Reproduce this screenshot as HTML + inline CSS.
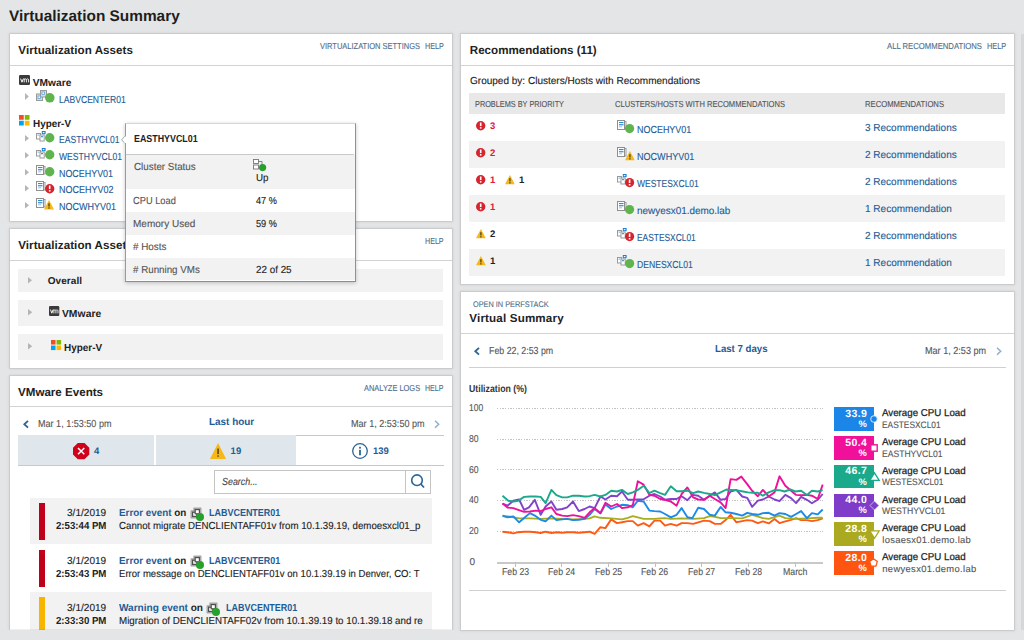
<!DOCTYPE html>
<html><head><meta charset="utf-8"><title>Virtualization Summary</title>
<style>
html,body{margin:0;padding:0;}
body{width:1024px;height:640px;overflow:hidden;position:relative;background:#e4e5e7;font-family:"Liberation Sans", sans-serif;}
.t{position:absolute;white-space:pre;line-height:20px;text-rendering:geometricPrecision;}
svg{overflow:visible;}
</style></head><body>
<div class="t" style="left:9.30px;top:7px;font-size:15.4px;color:#1e1e1e;font-weight:700;transform:scaleX(0.9995);transform-origin:0 0;">Virtualization Summary</div>
<div style="position:absolute;left:10px;top:34px;width:442px;height:187px;background:#fff;box-shadow:0 0 0 1px rgba(0,0,0,0.06),0 0 3px 1px rgba(0,0,0,0.09);"></div>
<div style="position:absolute;left:10px;top:65px;width:442px;height:1px;background:#d2d2d2;"></div>
<div class="t" style="left:18.30px;top:41px;font-size:11.6px;color:#222222;font-weight:700;letter-spacing:0.065px;">Virtualization Assets</div>
<div class="t" style="left:320.00px;top:36px;font-size:8.7px;color:#4f6f8c;transform:scaleX(0.8620);transform-origin:0 0;-webkit-text-stroke:0.12px #4f6f8c;">VIRTUALIZATION SETTINGS</div>
<div class="t" style="left:424.60px;top:36px;font-size:8.7px;color:#4f6f8c;transform:scaleX(0.8325);transform-origin:0 0;-webkit-text-stroke:0.12px #4f6f8c;">HELP</div>
<svg style="position:absolute;left:19px;top:75px" width="11" height="10" viewBox="0 0 11 10"><g transform="scale(1.000,1.000)"><rect x="0" y="0" width="11" height="10" rx="1.2" fill="#3a3a3a"/><path d="M1.6 3.6L3 7.2L4.4 3.6" fill="none" stroke="#fff" stroke-width="1"/><path d="M5.2 7.4V3.6M5.2 4.6Q5.9 3.5 6.9 3.9Q7.4 4.2 7.4 5V7.4M7.4 4.6Q8.1 3.5 9 3.9Q9.6 4.2 9.6 5V7.4" fill="none" stroke="#fff" stroke-width="0.9"/></g></svg>
<div class="t" style="left:32.70px;top:74px;font-size:10.2px;color:#222222;font-weight:700;letter-spacing:0.037px;">VMware</div>
<svg style="position:absolute;left:25px;top:93.4px" width="3.8" height="7" viewBox="0 0 3.8 7"><path d="M0 0L3.8 3.5L0 7Z" fill="#b5b5b5"/></svg>
<svg style="position:absolute;left:36px;top:89.5px" width="12" height="11" viewBox="0 0 12 11"><rect x="0.5" y="4" width="6" height="6.5" fill="#ddd" stroke="#9a9a9a" stroke-width="1"/><rect x="4.5" y="0.5" width="6" height="6.5" fill="#ddd" stroke="#9a9a9a" stroke-width="1"/><rect x="2" y="6" width="2.5" height="2.5" fill="#fff" stroke="#5ba3d6" stroke-width="0.8"/><rect x="6" y="2" width="2.5" height="2.5" fill="#fff" stroke="#5ba3d6" stroke-width="0.8"/></svg>
<svg style="position:absolute;left:44.7px;top:93.10000000000001px" width="9.6" height="9.6" viewBox="0 0 9.6 9.6"><circle cx="4.8" cy="4.8" r="4.8" fill="#5fb44e"/></svg>
<div class="t" style="left:58.80px;top:91px;font-size:10.2px;color:#1d5c96;transform:scaleX(0.8426);transform-origin:0 0;-webkit-text-stroke:0.12px #1d5c96;">LABVCENTER01</div>
<svg style="position:absolute;left:19px;top:115px" width="10.5" height="10.5" viewBox="0 0 10.5 10.5"><rect x="0" y="0" width="4.75" height="4.75" fill="#f25022"/><rect x="5.75" y="0" width="4.75" height="4.75" fill="#7fba00"/><rect x="0" y="5.75" width="4.75" height="4.75" fill="#00a4ef"/><rect x="5.75" y="5.75" width="4.75" height="4.75" fill="#ffb900"/></svg>
<div class="t" style="left:32.70px;top:115px;font-size:10.2px;color:#222222;font-weight:700;transform:scaleX(0.9724);transform-origin:0 0;">Hyper-V</div>
<svg style="position:absolute;left:25.1px;top:134.6px" width="4" height="6.5" viewBox="0 0 4 6.5"><path d="M0 0L4 3.25L0 6.5Z" fill="#b5b5b5"/></svg>
<svg style="position:absolute;left:36px;top:130.9px" width="10" height="10" viewBox="0 0 10 10"><rect x="0.5" y="2.5" width="4" height="5.5" fill="#fff" stroke="#9a9a9a" stroke-width="1"/><rect x="4" y="4" width="4.2" height="6" fill="#fff" stroke="#9a9a9a" stroke-width="1"/><rect x="5.8" y="0" width="3.8" height="3.2" fill="#1e7fcf"/><rect x="6.8" y="1" width="1.6" height="1.2" fill="#fff"/><rect x="5" y="5.2" width="2" height="1" fill="#1e7fcf"/><rect x="1.5" y="3.5" width="2" height="1.2" fill="#7cc0e0"/></svg>
<svg style="position:absolute;left:44.9px;top:133.4px" width="9.4" height="9.4" viewBox="0 0 9.4 9.4"><circle cx="4.7" cy="4.7" r="4.7" fill="#5fb44e"/></svg>
<div class="t" style="left:58.60px;top:131px;font-size:10.2px;color:#1d5c96;transform:scaleX(0.8412);transform-origin:0 0;-webkit-text-stroke:0.12px #1d5c96;">EASTHYVCL01</div>
<svg style="position:absolute;left:25.1px;top:151.6px" width="4" height="6.5" viewBox="0 0 4 6.5"><path d="M0 0L4 3.25L0 6.5Z" fill="#b5b5b5"/></svg>
<svg style="position:absolute;left:36px;top:147.9px" width="10" height="10" viewBox="0 0 10 10"><rect x="0.5" y="2.5" width="4" height="5.5" fill="#fff" stroke="#9a9a9a" stroke-width="1"/><rect x="4" y="4" width="4.2" height="6" fill="#fff" stroke="#9a9a9a" stroke-width="1"/><rect x="5.8" y="0" width="3.8" height="3.2" fill="#1e7fcf"/><rect x="6.8" y="1" width="1.6" height="1.2" fill="#fff"/><rect x="5" y="5.2" width="2" height="1" fill="#1e7fcf"/><rect x="1.5" y="3.5" width="2" height="1.2" fill="#7cc0e0"/></svg>
<svg style="position:absolute;left:44.9px;top:150.4px" width="9.4" height="9.4" viewBox="0 0 9.4 9.4"><circle cx="4.7" cy="4.7" r="4.7" fill="#5fb44e"/></svg>
<div class="t" style="left:58.60px;top:148px;font-size:10.2px;color:#1d5c96;transform:scaleX(0.8430);transform-origin:0 0;-webkit-text-stroke:0.12px #1d5c96;">WESTHYVCL01</div>
<svg style="position:absolute;left:25.1px;top:168.6px" width="4" height="6.5" viewBox="0 0 4 6.5"><path d="M0 0L4 3.25L0 6.5Z" fill="#b5b5b5"/></svg>
<svg style="position:absolute;left:36px;top:165.1px" width="10" height="10" viewBox="0 0 10 10"><rect x="6" y="1.5" width="3" height="7.5" fill="#fff" stroke="#9a9a9a" stroke-width="1"/><rect x="0.5" y="0.5" width="7" height="9" fill="#fff" stroke="#8f8f8f" stroke-width="1"/><rect x="2" y="2" width="4.5" height="1.1" fill="#2b8fd0"/><rect x="2" y="4.2" width="4.5" height="1.1" fill="#2b7fd0"/><rect x="2" y="6.3" width="3" height="1" fill="#8ec5ea"/></svg>
<svg style="position:absolute;left:44.9px;top:167.4px" width="9.4" height="9.4" viewBox="0 0 9.4 9.4"><circle cx="4.7" cy="4.7" r="4.7" fill="#5fb44e"/></svg>
<div class="t" style="left:58.60px;top:165px;font-size:10.2px;color:#1d5c96;transform:scaleX(0.8749);transform-origin:0 0;-webkit-text-stroke:0.12px #1d5c96;">NOCEHYV01</div>
<svg style="position:absolute;left:25.1px;top:184.6px" width="4" height="6.5" viewBox="0 0 4 6.5"><path d="M0 0L4 3.25L0 6.5Z" fill="#b5b5b5"/></svg>
<svg style="position:absolute;left:36px;top:181.1px" width="10" height="10" viewBox="0 0 10 10"><rect x="6" y="1.5" width="3" height="7.5" fill="#fff" stroke="#9a9a9a" stroke-width="1"/><rect x="0.5" y="0.5" width="7" height="9" fill="#fff" stroke="#8f8f8f" stroke-width="1"/><rect x="2" y="2" width="4.5" height="1.1" fill="#2b8fd0"/><rect x="2" y="4.2" width="4.5" height="1.1" fill="#2b7fd0"/><rect x="2" y="6.3" width="3" height="1" fill="#8ec5ea"/></svg>
<svg style="position:absolute;left:45.0px;top:183.9px" width="9.4" height="9.4" viewBox="0 0 9.4 9.4"><circle cx="4.7" cy="4.7" r="4.7" fill="#d7232d"/><rect x="3.9000000000000004" y="1.5" width="1.6" height="3.6" fill="#fff"/><rect x="3.9000000000000004" y="6.1" width="1.6" height="1.5" fill="#fff"/></svg>
<div class="t" style="left:58.60px;top:181px;font-size:10.2px;color:#1d5c96;transform:scaleX(0.8830);transform-origin:0 0;-webkit-text-stroke:0.12px #1d5c96;">NOCEHYV02</div>
<svg style="position:absolute;left:25.1px;top:201.6px" width="4" height="6.5" viewBox="0 0 4 6.5"><path d="M0 0L4 3.25L0 6.5Z" fill="#b5b5b5"/></svg>
<svg style="position:absolute;left:36px;top:198.1px" width="10" height="10" viewBox="0 0 10 10"><rect x="6" y="1.5" width="3" height="7.5" fill="#fff" stroke="#9a9a9a" stroke-width="1"/><rect x="0.5" y="0.5" width="7" height="9" fill="#fff" stroke="#8f8f8f" stroke-width="1"/><rect x="2" y="2" width="4.5" height="1.1" fill="#2b8fd0"/><rect x="2" y="4.2" width="4.5" height="1.1" fill="#2b7fd0"/><rect x="2" y="6.3" width="3" height="1" fill="#8ec5ea"/></svg>
<svg style="position:absolute;left:44.4px;top:200.3px" width="10" height="9.4" viewBox="0 0 10 9.4"><path d="M5.0 0L10 9.4L0 9.4Z" fill="#f5b71a"/><rect x="4.3" y="3.29" width="1.4" height="3.29" fill="#5a4a1a"/><rect x="4.3" y="7.332000000000001" width="1.4" height="1.3" fill="#5a4a1a"/></svg>
<div class="t" style="left:58.60px;top:198px;font-size:10.2px;color:#1d5c96;transform:scaleX(0.8831);transform-origin:0 0;-webkit-text-stroke:0.12px #1d5c96;">NOCWHYV01</div>
<div style="position:absolute;left:10px;top:229px;width:442px;height:139px;background:#fff;box-shadow:0 0 0 1px rgba(0,0,0,0.06),0 0 3px 1px rgba(0,0,0,0.09);"></div>
<div style="position:absolute;left:10px;top:260px;width:442px;height:1px;background:#d2d2d2;"></div>
<div class="t" style="left:18.20px;top:236px;font-size:11.6px;color:#222222;font-weight:700;letter-spacing:0.065px;">Virtualization Assets</div>
<div class="t" style="left:424.80px;top:231px;font-size:8.7px;color:#4f6f8c;transform:scaleX(0.8193);transform-origin:0 0;-webkit-text-stroke:0.12px #4f6f8c;">HELP</div>
<div style="position:absolute;left:18px;top:269px;width:424.5px;height:23px;background:#f2f2f2;"></div>
<div style="position:absolute;left:18px;top:300px;width:424.5px;height:26px;background:#f2f2f2;"></div>
<div style="position:absolute;left:18px;top:334px;width:424.5px;height:26px;background:#f2f2f2;"></div>
<svg style="position:absolute;left:28.2px;top:277px" width="4" height="6.6" viewBox="0 0 4 6.6"><path d="M0 0L4 3.3L0 6.6Z" fill="#b5b5b5"/></svg>
<div class="t" style="left:47.70px;top:272px;font-size:10.0px;color:#222222;font-weight:700;letter-spacing:0.080px;">Overall</div>
<svg style="position:absolute;left:28.1px;top:309.4px" width="4.2" height="6.4" viewBox="0 0 4.2 6.4"><path d="M0 0L4.2 3.2L0 6.4Z" fill="#b5b5b5"/></svg>
<svg style="position:absolute;left:48.75px;top:306px" width="10.3" height="10" viewBox="0 0 10.3 10"><g transform="scale(0.936,1.000)"><rect x="0" y="0" width="11" height="10" rx="1.2" fill="#3a3a3a"/><path d="M1.6 3.6L3 7.2L4.4 3.6" fill="none" stroke="#fff" stroke-width="1"/><path d="M5.2 7.4V3.6M5.2 4.6Q5.9 3.5 6.9 3.9Q7.4 4.2 7.4 5V7.4M7.4 4.6Q8.1 3.5 9 3.9Q9.6 4.2 9.6 5V7.4" fill="none" stroke="#fff" stroke-width="0.9"/></g></svg>
<div class="t" style="left:61.90px;top:305px;font-size:10.3px;color:#222222;font-weight:700;letter-spacing:0.096px;">VMware</div>
<svg style="position:absolute;left:28.1px;top:343px" width="4.2" height="6.4" viewBox="0 0 4.2 6.4"><path d="M0 0L4.2 3.2L0 6.4Z" fill="#b5b5b5"/></svg>
<svg style="position:absolute;left:50.9px;top:339.75px" width="10.1" height="10.1" viewBox="0 0 10.1 10.1"><rect x="0" y="0" width="4.55" height="4.55" fill="#f25022"/><rect x="5.55" y="0" width="4.55" height="4.55" fill="#7fba00"/><rect x="0" y="5.55" width="4.55" height="4.55" fill="#00a4ef"/><rect x="5.55" y="5.55" width="4.55" height="4.55" fill="#ffb900"/></svg>
<div class="t" style="left:64.40px;top:339px;font-size:10.3px;color:#222222;font-weight:700;transform:scaleX(0.9649);transform-origin:0 0;">Hyper-V</div>
<div style="position:absolute;left:10px;top:376px;width:442px;height:254px;background:#fff;box-shadow:0 0 0 1px rgba(0,0,0,0.06),0 0 3px 1px rgba(0,0,0,0.09);"></div>
<div style="position:absolute;left:10px;top:406px;width:442px;height:1px;background:#d2d2d2;"></div>
<div class="t" style="left:18.00px;top:383px;font-size:11.6px;color:#222222;font-weight:700;">VMware Events</div>
<div class="t" style="left:364.20px;top:378px;font-size:8.7px;color:#4f6f8c;transform:scaleX(0.8565);transform-origin:0 0;-webkit-text-stroke:0.12px #4f6f8c;">ANALYZE LOGS</div>
<div class="t" style="left:425.40px;top:378px;font-size:8.7px;color:#4f6f8c;transform:scaleX(0.8105);transform-origin:0 0;-webkit-text-stroke:0.12px #4f6f8c;">HELP</div>
<svg style="position:absolute;left:22.5px;top:420px" width="6" height="8.5" viewBox="0 0 6 8.5"><path d="M5 0.8L1.3 4.25L5 7.7" fill="none" stroke="#2a6496" stroke-width="1.8"/></svg>
<div class="t" style="left:37.60px;top:415px;font-size:10.2px;color:#555555;transform:scaleX(0.8889);transform-origin:0 0;-webkit-text-stroke:0.12px #555555;">Mar 1, 1:53:50 pm</div>
<div class="t" style="left:208.70px;top:413px;font-size:10.2px;color:#1d5c96;font-weight:700;transform:scaleX(0.9737);transform-origin:0 0;">Last hour</div>
<div class="t" style="left:350.70px;top:415px;font-size:10.2px;color:#555555;transform:scaleX(0.8901);transform-origin:0 0;-webkit-text-stroke:0.12px #555555;">Mar 1, 2:53:50 pm</div>
<svg style="position:absolute;left:434px;top:420px" width="6" height="8.5" viewBox="0 0 6 8.5"><path d="M1 0.8L4.7 4.25L1 7.7" fill="none" stroke="#8fb0cc" stroke-width="1.5"/></svg>
<div style="position:absolute;left:18px;top:435px;width:278px;height:30px;background:#dfe7ed;"></div>
<div style="position:absolute;left:154px;top:435px;width:1.5px;height:30px;background:#fff;"></div>
<div style="position:absolute;left:296px;top:435px;width:148px;height:1px;background:#c8c8c8;"></div>
<div style="position:absolute;left:18px;top:465px;width:426px;height:1px;background:#c8c8c8;"></div>
<svg style="position:absolute;left:72.8px;top:442.8px" width="16.3" height="16.3" viewBox="0 0 16.3 16.3"><path d="M4.8 0H11.5L16.3 4.8V11.5L11.5 16.3H4.8L0 11.5V4.8Z" fill="#d0021b"/><path d="M5 5L11.3 11.3M11.3 5L5 11.3" stroke="#fff" stroke-width="1.5"/></svg>
<div class="t" style="left:94.00px;top:442px;font-size:9.5px;color:#1d5c96;font-weight:700;">4</div>
<svg style="position:absolute;left:210px;top:443.1px" width="16.1" height="15.9" viewBox="0 0 16.1 15.9"><path d="M8.05 0L16.1 15.9L0 15.9Z" fill="#f5b71a"/><rect x="7.3500000000000005" y="5.5649999999999995" width="1.4" height="5.5649999999999995" fill="#4a3a10"/><rect x="7.3500000000000005" y="12.402000000000001" width="1.4" height="1.3" fill="#4a3a10"/></svg>
<div class="t" style="left:230.40px;top:442px;font-size:9.5px;color:#1d5c96;font-weight:700;letter-spacing:0.222px;">19</div>
<svg style="position:absolute;left:352px;top:442.9px" width="16" height="16" viewBox="0 0 16 16"><circle cx="8" cy="8" r="7.3" fill="none" stroke="#2a6496" stroke-width="1.3"/><rect x="7.1" y="6.8" width="1.8" height="5.5" fill="#2a6496"/><rect x="7.1" y="3.8" width="1.8" height="1.8" fill="#2a6496"/></svg>
<div class="t" style="left:372.50px;top:442px;font-size:9.5px;color:#1d5c96;font-weight:700;transform:scaleX(0.9963);transform-origin:0 0;">139</div>
<div style="position:absolute;left:214.3px;top:470.4px;width:216.6px;height:23.2px;background:#fff;border:1px solid #c4c4c4;box-sizing:border-box;"></div>
<div style="position:absolute;left:404.7px;top:470.4px;width:1px;height:23.2px;background:#c4c4c4;"></div>
<svg style="position:absolute;left:410px;top:473px" width="16" height="16" viewBox="0 0 16 16"><circle cx="7" cy="7.2" r="5.3" fill="none" stroke="#2a6496" stroke-width="1.6"/><path d="M10.8 11L14 14.5" stroke="#2a6496" stroke-width="1.8"/></svg>
<div class="t" style="left:222.10px;top:473px;font-size:10.2px;color:#444;font-style:italic;transform:scaleX(0.8730);transform-origin:0 0;-webkit-text-stroke:0.12px #444;">Search...</div>
<div style="position:absolute;left:30px;top:498px;width:402px;height:46.39999999999998px;background:#f2f2f2;"></div>
<div style="position:absolute;left:38.7px;top:502.9px;width:6.3px;height:36.8px;background:#c0001a;"></div>
<div class="t" style="left:66.80px;top:504px;font-size:10.2px;color:#222222;transform:scaleX(0.9885);transform-origin:0 0;-webkit-text-stroke:0.12px #222222;">3/1/2019</div>
<div class="t" style="left:55.60px;top:517px;font-size:10.2px;color:#222222;font-weight:700;transform:scaleX(0.9468);transform-origin:0 0;">2:53:44 PM</div>
<div class="t" style="left:118.90px;top:504px;font-size:10.2px;color:#1d5c96;font-weight:700;transform:scaleX(0.9678);transform-origin:0 0;">Error event <span style="color:#222">on</span></div>
<svg style="position:absolute;left:190.2px;top:507px" width="12" height="12" viewBox="0 0 12 12"><path d="M4 1.2H10.8V8H8V10.8H1.2V4H4Z" fill="#c9c9c9" stroke="#a5a5a5" stroke-width="1.4" stroke-linejoin="round"/><rect x="2.6" y="5.2" width="4.2" height="4.2" fill="#fff" stroke="#505050" stroke-width="1.2"/><rect x="5.2" y="2.6" width="4.2" height="4.2" fill="#fff" stroke="#505050" stroke-width="1.2"/></svg>
<svg style="position:absolute;left:196.0px;top:512.8px" width="8" height="8" viewBox="0 0 8 8"><circle cx="4" cy="4" r="4" fill="#27a02c"/></svg>
<div class="t" style="left:209.40px;top:504px;font-size:10.2px;color:#1d5c96;font-weight:700;transform:scaleX(0.8808);transform-origin:0 0;">LABVCENTER01</div>
<div class="t" style="left:118.90px;top:517px;font-size:10.2px;color:#222222;transform:scaleX(0.9531);transform-origin:0 0;-webkit-text-stroke:0.12px #222222;">Cannot migrate DENCLIENTAFF01v from 10.1.39.19, demoesxcl01_p</div>
<div style="position:absolute;left:38.7px;top:549.8px;width:6.3px;height:36.8px;background:#c0001a;"></div>
<div class="t" style="left:66.80px;top:552px;font-size:10.2px;color:#222222;transform:scaleX(0.9885);transform-origin:0 0;-webkit-text-stroke:0.12px #222222;">3/1/2019</div>
<div class="t" style="left:55.60px;top:565px;font-size:10.2px;color:#222222;font-weight:700;transform:scaleX(0.9468);transform-origin:0 0;">2:53:43 PM</div>
<div class="t" style="left:118.90px;top:552px;font-size:10.2px;color:#1d5c96;font-weight:700;transform:scaleX(0.9678);transform-origin:0 0;">Error event <span style="color:#222">on</span></div>
<svg style="position:absolute;left:190.2px;top:555px" width="12" height="12" viewBox="0 0 12 12"><path d="M4 1.2H10.8V8H8V10.8H1.2V4H4Z" fill="#c9c9c9" stroke="#a5a5a5" stroke-width="1.4" stroke-linejoin="round"/><rect x="2.6" y="5.2" width="4.2" height="4.2" fill="#fff" stroke="#505050" stroke-width="1.2"/><rect x="5.2" y="2.6" width="4.2" height="4.2" fill="#fff" stroke="#505050" stroke-width="1.2"/></svg>
<svg style="position:absolute;left:196.0px;top:560.8px" width="8" height="8" viewBox="0 0 8 8"><circle cx="4" cy="4" r="4" fill="#27a02c"/></svg>
<div class="t" style="left:209.40px;top:552px;font-size:10.2px;color:#1d5c96;font-weight:700;transform:scaleX(0.8808);transform-origin:0 0;">LABVCENTER01</div>
<div class="t" style="left:118.90px;top:565px;font-size:10.2px;color:#222222;transform:scaleX(0.9387);transform-origin:0 0;-webkit-text-stroke:0.12px #222222;">Error message on DENCLIENTAFF01v on 10.1.39.19 in Denver, CO: T</div>
<div style="position:absolute;left:30px;top:592px;width:402px;height:48px;background:#f2f2f2;"></div>
<div style="position:absolute;left:38.7px;top:597px;width:6.3px;height:36.8px;background:#f7b500;"></div>
<div class="t" style="left:66.80px;top:599px;font-size:10.2px;color:#222222;transform:scaleX(0.9885);transform-origin:0 0;-webkit-text-stroke:0.12px #222222;">3/1/2019</div>
<div class="t" style="left:55.60px;top:612px;font-size:10.2px;color:#222222;font-weight:700;transform:scaleX(0.9468);transform-origin:0 0;">2:33:30 PM</div>
<div class="t" style="left:118.90px;top:599px;font-size:10.2px;color:#1d5c96;font-weight:700;transform:scaleX(0.9871);transform-origin:0 0;">Warning event <span style="color:#222">on</span></div>
<svg style="position:absolute;left:206px;top:602px" width="12" height="12" viewBox="0 0 12 12"><path d="M4 1.2H10.8V8H8V10.8H1.2V4H4Z" fill="#c9c9c9" stroke="#a5a5a5" stroke-width="1.4" stroke-linejoin="round"/><rect x="2.6" y="5.2" width="4.2" height="4.2" fill="#fff" stroke="#505050" stroke-width="1.2"/><rect x="5.2" y="2.6" width="4.2" height="4.2" fill="#fff" stroke="#505050" stroke-width="1.2"/></svg>
<svg style="position:absolute;left:211.8px;top:607.8px" width="8" height="8" viewBox="0 0 8 8"><circle cx="4" cy="4" r="4" fill="#27a02c"/></svg>
<div class="t" style="left:225.50px;top:599px;font-size:10.2px;color:#1d5c96;font-weight:700;transform:scaleX(0.8808);transform-origin:0 0;">LABVCENTER01</div>
<div class="t" style="left:118.90px;top:612px;font-size:10.2px;color:#222222;transform:scaleX(0.9586);transform-origin:0 0;-webkit-text-stroke:0.12px #222222;">Migration of DENCLIENTAFF02v from 10.1.39.19 to 10.1.39.18 and re</div>
<div style="position:absolute;left:0px;top:630px;width:460px;height:10px;background:#e4e5e7;"></div>
<div style="position:absolute;left:10px;top:629px;width:442px;height:1px;background:rgba(0,0,0,0.06);"></div>
<div style="position:absolute;left:124.6px;top:122.7px;width:231px;height:159.3px;background:#fff;border:1px solid;border-color:#d6d6d6 #909090 #8c8c8c #9a9a9a;box-sizing:border-box;box-shadow:0 1px 4px rgba(0,0,0,0.22);"></div>
<svg style="position:absolute;left:120.8px;top:135.6px" width="5" height="7.6" viewBox="0 0 5 7.6"><path d="M4.2 0L0.6 3.8L4.2 7.6Z" fill="#fff"/><path d="M4.2 0L0.6 3.8L4.2 7.6" fill="none" stroke="#9a9a9a" stroke-width="0.9"/><rect x="3.6" y="0.6" width="1.6" height="6.4" fill="#fff"/></svg>
<div style="position:absolute;left:125.6px;top:154px;width:228.9px;height:1px;background:#c9c9c9;"></div>
<div style="position:absolute;left:125.6px;top:155px;width:229px;height:33.8px;background:#f2f2f2;"></div>
<div style="position:absolute;left:125.6px;top:212px;width:229px;height:22.7px;background:#f2f2f2;"></div>
<div style="position:absolute;left:125.6px;top:258px;width:229px;height:22px;background:#f2f2f2;"></div>
<div class="t" style="left:133.70px;top:130px;font-size:10.2px;color:#222222;font-weight:700;transform:scaleX(0.8709);transform-origin:0 0;">EASTHYVCL01</div>
<div class="t" style="left:133.50px;top:158px;font-size:10.2px;color:#555555;transform:scaleX(0.9643);transform-origin:0 0;-webkit-text-stroke:0.12px #555555;">Cluster Status</div>
<div class="t" style="left:255.70px;top:169px;font-size:10.2px;color:#222222;transform:scaleX(0.9592);transform-origin:0 0;-webkit-text-stroke:0.12px #222222;">Up</div>
<svg style="position:absolute;left:252.7px;top:159px" width="11" height="11" viewBox="0 0 11 11"><rect x="0.5" y="0.5" width="5" height="4" fill="#fff" stroke="#777" stroke-width="0.9"/><rect x="0.5" y="6" width="5" height="4" fill="#fff" stroke="#777" stroke-width="0.9"/><path d="M5.5 2.5H9V7" fill="none" stroke="#777" stroke-width="0.9"/></svg>
<svg style="position:absolute;left:259.4px;top:164.1px" width="7.2" height="7.2" viewBox="0 0 7.2 7.2"><circle cx="3.6" cy="3.6" r="3.6" fill="#27a02c"/></svg>
<div class="t" style="left:133.40px;top:192px;font-size:10.2px;color:#555555;transform:scaleX(0.9103);transform-origin:0 0;-webkit-text-stroke:0.12px #555555;">CPU Load</div>
<div class="t" style="left:255.50px;top:192px;font-size:10.2px;color:#222222;transform:scaleX(0.9038);transform-origin:0 0;-webkit-text-stroke:0.12px #222222;">47 %</div>
<div class="t" style="left:133.40px;top:215px;font-size:10.2px;color:#555555;transform:scaleX(0.9826);transform-origin:0 0;-webkit-text-stroke:0.12px #555555;">Memory Used</div>
<div class="t" style="left:255.50px;top:215px;font-size:10.2px;color:#222222;transform:scaleX(0.9038);transform-origin:0 0;-webkit-text-stroke:0.12px #222222;">59 %</div>
<div class="t" style="left:133.40px;top:238px;font-size:10.2px;color:#555555;transform:scaleX(0.9697);transform-origin:0 0;-webkit-text-stroke:0.12px #555555;"># Hosts</div>
<div class="t" style="left:133.40px;top:261px;font-size:10.2px;color:#555555;transform:scaleX(0.9590);transform-origin:0 0;-webkit-text-stroke:0.12px #555555;"># Running VMs</div>
<div class="t" style="left:255.50px;top:261px;font-size:10.2px;color:#222222;transform:scaleX(0.9667);transform-origin:0 0;-webkit-text-stroke:0.12px #222222;">22 of 25</div>
<div style="position:absolute;left:461px;top:34px;width:553px;height:250px;background:#fff;box-shadow:0 0 0 1px rgba(0,0,0,0.06),0 0 3px 1px rgba(0,0,0,0.09);"></div>
<div style="position:absolute;left:461px;top:65px;width:553px;height:1px;background:#d2d2d2;"></div>
<div class="t" style="left:469.80px;top:41px;font-size:11.6px;color:#222222;font-weight:700;">Recommendations (11)</div>
<div class="t" style="left:887.00px;top:36px;font-size:8.7px;color:#4f6f8c;transform:scaleX(0.8864);transform-origin:0 0;-webkit-text-stroke:0.12px #4f6f8c;">ALL RECOMMENDATIONS</div>
<div class="t" style="left:986.80px;top:36px;font-size:8.7px;color:#4f6f8c;transform:scaleX(0.8457);transform-origin:0 0;-webkit-text-stroke:0.12px #4f6f8c;">HELP</div>
<div class="t" style="left:469.80px;top:72px;font-size:10.2px;color:#222222;transform:scaleX(0.9835);transform-origin:0 0;-webkit-text-stroke:0.12px #222222;">Grouped by: Clusters/Hosts with Recommendations</div>
<div style="position:absolute;left:469px;top:93px;width:536px;height:20.7px;background:#e8e8e9;"></div>
<div class="t" style="left:474.80px;top:94px;font-size:8.7px;color:#555;transform:scaleX(0.8430);transform-origin:0 0;-webkit-text-stroke:0.12px #555;">PROBLEMS BY PRIORITY</div>
<div class="t" style="left:614.80px;top:94px;font-size:8.7px;color:#555;transform:scaleX(0.8703);transform-origin:0 0;-webkit-text-stroke:0.12px #555;">CLUSTERS/HOSTS WITH RECOMMENDATIONS</div>
<div class="t" style="left:864.60px;top:94px;font-size:8.7px;color:#555;transform:scaleX(0.8815);transform-origin:0 0;-webkit-text-stroke:0.12px #555;">RECOMMENDATIONS</div>
<svg style="position:absolute;left:476.3px;top:121.0px" width="9.4" height="9.4" viewBox="0 0 9.4 9.4"><circle cx="4.7" cy="4.7" r="4.7" fill="#d7232d"/><rect x="3.9000000000000004" y="1.5" width="1.6" height="3.6" fill="#fff"/><rect x="3.9000000000000004" y="6.1" width="1.6" height="1.5" fill="#fff"/></svg>
<div class="t" style="left:489.90px;top:117px;font-size:9.5px;color:#e0193c;font-weight:700;">3</div>
<svg style="position:absolute;left:617px;top:120.0px" width="10" height="10" viewBox="0 0 10 10"><rect x="6" y="1.5" width="3" height="7.5" fill="#fff" stroke="#9a9a9a" stroke-width="1"/><rect x="0.5" y="0.5" width="7" height="9" fill="#fff" stroke="#8f8f8f" stroke-width="1"/><rect x="2" y="2" width="4.5" height="1.1" fill="#2b8fd0"/><rect x="2" y="4.2" width="4.5" height="1.1" fill="#2b7fd0"/><rect x="2" y="6.3" width="3" height="1" fill="#8ec5ea"/></svg>
<svg style="position:absolute;left:625.1999999999999px;top:123.5px" width="9.2" height="9.2" viewBox="0 0 9.2 9.2"><circle cx="4.6" cy="4.6" r="4.6" fill="#5fb44e"/></svg>
<div class="t" style="left:636.70px;top:121px;font-size:10.2px;color:#1d5c96;transform:scaleX(0.8798);transform-origin:0 0;-webkit-text-stroke:0.12px #1d5c96;">NOCEHYV01</div>
<div class="t" style="left:865.00px;top:119px;font-size:10.2px;color:#1d5c96;transform:scaleX(0.9814);transform-origin:0 0;-webkit-text-stroke:0.12px #1d5c96;">3 Recommendations</div>
<div style="position:absolute;left:469px;top:140.7px;width:536px;height:27px;background:#f2f2f2;"></div>
<svg style="position:absolute;left:476.3px;top:148.0px" width="9.4" height="9.4" viewBox="0 0 9.4 9.4"><circle cx="4.7" cy="4.7" r="4.7" fill="#d7232d"/><rect x="3.9000000000000004" y="1.5" width="1.6" height="3.6" fill="#fff"/><rect x="3.9000000000000004" y="6.1" width="1.6" height="1.5" fill="#fff"/></svg>
<div class="t" style="left:489.90px;top:144px;font-size:9.5px;color:#e0193c;font-weight:700;">2</div>
<svg style="position:absolute;left:617px;top:147.0px" width="10" height="10" viewBox="0 0 10 10"><rect x="6" y="1.5" width="3" height="7.5" fill="#fff" stroke="#9a9a9a" stroke-width="1"/><rect x="0.5" y="0.5" width="7" height="9" fill="#fff" stroke="#8f8f8f" stroke-width="1"/><rect x="2" y="2" width="4.5" height="1.1" fill="#2b8fd0"/><rect x="2" y="4.2" width="4.5" height="1.1" fill="#2b7fd0"/><rect x="2" y="6.3" width="3" height="1" fill="#8ec5ea"/></svg>
<svg style="position:absolute;left:624.8px;top:150.7px" width="9.8" height="9.2" viewBox="0 0 9.8 9.2"><path d="M4.9 0L9.8 9.2L0 9.2Z" fill="#f5b71a"/><rect x="4.2" y="3.2199999999999998" width="1.4" height="3.2199999999999998" fill="#5a4a1a"/><rect x="4.2" y="7.175999999999999" width="1.4" height="1.3" fill="#5a4a1a"/></svg>
<div class="t" style="left:636.70px;top:148px;font-size:10.2px;color:#1d5c96;transform:scaleX(0.8877);transform-origin:0 0;-webkit-text-stroke:0.12px #1d5c96;">NOCWHYV01</div>
<div class="t" style="left:865.00px;top:146px;font-size:10.2px;color:#1d5c96;transform:scaleX(0.9814);transform-origin:0 0;-webkit-text-stroke:0.12px #1d5c96;">2 Recommendations</div>
<svg style="position:absolute;left:476.3px;top:175.0px" width="9.4" height="9.4" viewBox="0 0 9.4 9.4"><circle cx="4.7" cy="4.7" r="4.7" fill="#d7232d"/><rect x="3.9000000000000004" y="1.5" width="1.6" height="3.6" fill="#fff"/><rect x="3.9000000000000004" y="6.1" width="1.6" height="1.5" fill="#fff"/></svg>
<div class="t" style="left:489.90px;top:171px;font-size:9.5px;color:#e0193c;font-weight:700;">1</div>
<svg style="position:absolute;left:504.5px;top:175.0px" width="9.8" height="9.2" viewBox="0 0 9.8 9.2"><path d="M4.9 0L9.8 9.2L0 9.2Z" fill="#f5b71a"/><rect x="4.2" y="3.2199999999999998" width="1.4" height="3.2199999999999998" fill="#5a4a1a"/><rect x="4.2" y="7.175999999999999" width="1.4" height="1.3" fill="#5a4a1a"/></svg>
<div class="t" style="left:519.00px;top:171px;font-size:9.5px;color:#222222;font-weight:700;">1</div>
<svg style="position:absolute;left:617px;top:173.5px" width="10" height="10" viewBox="0 0 10 10"><rect x="0.5" y="2.5" width="4" height="5.5" fill="#fff" stroke="#9a9a9a" stroke-width="1"/><rect x="4" y="4" width="4.2" height="6" fill="#fff" stroke="#9a9a9a" stroke-width="1"/><rect x="5.8" y="0" width="3.8" height="3.2" fill="#1e7fcf"/><rect x="6.8" y="1" width="1.6" height="1.2" fill="#fff"/><rect x="5" y="5.2" width="2" height="1" fill="#1e7fcf"/><rect x="1.5" y="3.5" width="2" height="1.2" fill="#7cc0e0"/></svg>
<svg style="position:absolute;left:625.1999999999999px;top:177.5px" width="9.2" height="9.2" viewBox="0 0 9.2 9.2"><circle cx="4.6" cy="4.6" r="4.6" fill="#d7232d"/><rect x="3.8" y="1.3999999999999995" width="1.6" height="3.6" fill="#fff"/><rect x="3.8" y="6.0" width="1.6" height="1.5" fill="#fff"/></svg>
<div class="t" style="left:636.70px;top:175px;font-size:10.2px;color:#1d5c96;transform:scaleX(0.8332);transform-origin:0 0;-webkit-text-stroke:0.12px #1d5c96;">WESTESXCL01</div>
<div class="t" style="left:865.00px;top:173px;font-size:10.2px;color:#1d5c96;transform:scaleX(0.9814);transform-origin:0 0;-webkit-text-stroke:0.12px #1d5c96;">2 Recommendations</div>
<div style="position:absolute;left:469px;top:194.7px;width:536px;height:27px;background:#f2f2f2;"></div>
<svg style="position:absolute;left:476.3px;top:202.0px" width="9.4" height="9.4" viewBox="0 0 9.4 9.4"><circle cx="4.7" cy="4.7" r="4.7" fill="#d7232d"/><rect x="3.9000000000000004" y="1.5" width="1.6" height="3.6" fill="#fff"/><rect x="3.9000000000000004" y="6.1" width="1.6" height="1.5" fill="#fff"/></svg>
<div class="t" style="left:489.90px;top:198px;font-size:9.5px;color:#e0193c;font-weight:700;">1</div>
<svg style="position:absolute;left:617px;top:201.0px" width="10" height="10" viewBox="0 0 10 10"><rect x="6" y="1.5" width="3" height="7.5" fill="#fff" stroke="#9a9a9a" stroke-width="1"/><rect x="0.5" y="0.5" width="7" height="9" fill="#fff" stroke="#8f8f8f" stroke-width="1"/><rect x="2" y="2" width="4.5" height="1.1" fill="#2b8fd0"/><rect x="2" y="4.2" width="4.5" height="1.1" fill="#2b7fd0"/><rect x="2" y="6.3" width="3" height="1" fill="#8ec5ea"/></svg>
<svg style="position:absolute;left:625.1999999999999px;top:204.5px" width="9.2" height="9.2" viewBox="0 0 9.2 9.2"><circle cx="4.6" cy="4.6" r="4.6" fill="#5fb44e"/></svg>
<div class="t" style="left:636.70px;top:202px;font-size:10.2px;color:#1d5c96;transform:scaleX(0.9747);transform-origin:0 0;-webkit-text-stroke:0.12px #1d5c96;">newyesx01.demo.lab</div>
<div class="t" style="left:865.00px;top:200px;font-size:10.2px;color:#1d5c96;transform:scaleX(0.9837);transform-origin:0 0;-webkit-text-stroke:0.12px #1d5c96;">1 Recommendation</div>
<svg style="position:absolute;left:476.2px;top:229.0px" width="9.8" height="9.2" viewBox="0 0 9.8 9.2"><path d="M4.9 0L9.8 9.2L0 9.2Z" fill="#f5b71a"/><rect x="4.2" y="3.2199999999999998" width="1.4" height="3.2199999999999998" fill="#5a4a1a"/><rect x="4.2" y="7.175999999999999" width="1.4" height="1.3" fill="#5a4a1a"/></svg>
<div class="t" style="left:489.90px;top:225px;font-size:9.5px;color:#222222;font-weight:700;">2</div>
<svg style="position:absolute;left:617px;top:227.5px" width="10" height="10" viewBox="0 0 10 10"><rect x="0.5" y="2.5" width="4" height="5.5" fill="#fff" stroke="#9a9a9a" stroke-width="1"/><rect x="4" y="4" width="4.2" height="6" fill="#fff" stroke="#9a9a9a" stroke-width="1"/><rect x="5.8" y="0" width="3.8" height="3.2" fill="#1e7fcf"/><rect x="6.8" y="1" width="1.6" height="1.2" fill="#fff"/><rect x="5" y="5.2" width="2" height="1" fill="#1e7fcf"/><rect x="1.5" y="3.5" width="2" height="1.2" fill="#7cc0e0"/></svg>
<svg style="position:absolute;left:625.1999999999999px;top:231.5px" width="9.2" height="9.2" viewBox="0 0 9.2 9.2"><circle cx="4.6" cy="4.6" r="4.6" fill="#d7232d"/><rect x="3.8" y="1.3999999999999995" width="1.6" height="3.6" fill="#fff"/><rect x="3.8" y="6.0" width="1.6" height="1.5" fill="#fff"/></svg>
<div class="t" style="left:636.70px;top:229px;font-size:10.2px;color:#1d5c96;transform:scaleX(0.8240);transform-origin:0 0;-webkit-text-stroke:0.12px #1d5c96;">EASTESXCL01</div>
<div class="t" style="left:865.00px;top:227px;font-size:10.2px;color:#1d5c96;transform:scaleX(0.9814);transform-origin:0 0;-webkit-text-stroke:0.12px #1d5c96;">2 Recommendations</div>
<div style="position:absolute;left:469px;top:248.7px;width:536px;height:27px;background:#f2f2f2;"></div>
<svg style="position:absolute;left:476.2px;top:256.0px" width="9.8" height="9.2" viewBox="0 0 9.8 9.2"><path d="M4.9 0L9.8 9.2L0 9.2Z" fill="#f5b71a"/><rect x="4.2" y="3.2199999999999998" width="1.4" height="3.2199999999999998" fill="#5a4a1a"/><rect x="4.2" y="7.175999999999999" width="1.4" height="1.3" fill="#5a4a1a"/></svg>
<div class="t" style="left:489.90px;top:252px;font-size:9.5px;color:#222222;font-weight:700;">1</div>
<svg style="position:absolute;left:617px;top:254.5px" width="10" height="10" viewBox="0 0 10 10"><rect x="0.5" y="2.5" width="4" height="5.5" fill="#fff" stroke="#9a9a9a" stroke-width="1"/><rect x="4" y="4" width="4.2" height="6" fill="#fff" stroke="#9a9a9a" stroke-width="1"/><rect x="5.8" y="0" width="3.8" height="3.2" fill="#1e7fcf"/><rect x="6.8" y="1" width="1.6" height="1.2" fill="#fff"/><rect x="5" y="5.2" width="2" height="1" fill="#1e7fcf"/><rect x="1.5" y="3.5" width="2" height="1.2" fill="#7cc0e0"/></svg>
<svg style="position:absolute;left:625.1999999999999px;top:258.49999999999994px" width="9.2" height="9.2" viewBox="0 0 9.2 9.2"><circle cx="4.6" cy="4.6" r="4.6" fill="#5fb44e"/></svg>
<div class="t" style="left:636.70px;top:256px;font-size:10.2px;color:#1d5c96;transform:scaleX(0.8438);transform-origin:0 0;-webkit-text-stroke:0.12px #1d5c96;">DENESXCL01</div>
<div class="t" style="left:865.00px;top:254px;font-size:10.2px;color:#1d5c96;transform:scaleX(0.9837);transform-origin:0 0;-webkit-text-stroke:0.12px #1d5c96;">1 Recommendation</div>
<div style="position:absolute;left:461px;top:292px;width:553px;height:338px;background:#fff;box-shadow:0 0 0 1px rgba(0,0,0,0.06),0 0 3px 1px rgba(0,0,0,0.09);"></div>
<div style="position:absolute;left:461px;top:333px;width:553px;height:1px;background:#d2d2d2;"></div>
<div class="t" style="left:473.40px;top:295px;font-size:8.1px;color:#4f6f8c;transform:scaleX(0.9054);transform-origin:0 0;-webkit-text-stroke:0.12px #4f6f8c;">OPEN IN PERFSTACK</div>
<div class="t" style="left:469.30px;top:309px;font-size:11.6px;color:#222222;font-weight:700;letter-spacing:0.169px;">Virtual Summary</div>
<svg style="position:absolute;left:473.6px;top:347px" width="6" height="8.5" viewBox="0 0 6 8.5"><path d="M5 0.8L1.3 4.25L5 7.7" fill="none" stroke="#2a6496" stroke-width="1.8"/></svg>
<div class="t" style="left:488.80px;top:342px;font-size:10.2px;color:#555555;transform:scaleX(0.8652);transform-origin:0 0;-webkit-text-stroke:0.12px #555555;">Feb 22, 2:53 pm</div>
<div class="t" style="left:715.00px;top:340px;font-size:10.2px;color:#1d5c96;font-weight:700;transform:scaleX(0.9459);transform-origin:0 0;">Last 7 days</div>
<div class="t" style="left:925.30px;top:342px;font-size:10.2px;color:#555555;transform:scaleX(0.8918);transform-origin:0 0;-webkit-text-stroke:0.12px #555555;">Mar 1, 2:53 pm</div>
<svg style="position:absolute;left:996px;top:347px" width="6" height="8.5" viewBox="0 0 6 8.5"><path d="M1 0.8L4.7 4.25L1 7.7" fill="none" stroke="#8fb0cc" stroke-width="1.5"/></svg>
<div style="position:absolute;left:469px;top:366.5px;width:537px;height:1px;background:#d0d0d0;"></div>
<div class="t" style="left:469.20px;top:380px;font-size:10.2px;color:#333;font-weight:700;transform:scaleX(0.8598);transform-origin:0 0;">Utilization (%)</div>
<svg style="position:absolute;left:497px;top:408px" width="326" height="1"><line x1="0" y1="0.5" x2="326" y2="0.5" stroke="#c4c4c4" stroke-width="1" stroke-dasharray="1 2 1 1 2 1"/></svg>
<div class="t" style="left:469.40px;top:399px;font-size:10.0px;color:#555;transform:scaleX(0.8509);transform-origin:0 0;-webkit-text-stroke:0.12px #555;">100</div>
<svg style="position:absolute;left:497px;top:439px" width="326" height="1"><line x1="0" y1="0.5" x2="326" y2="0.5" stroke="#c4c4c4" stroke-width="1" stroke-dasharray="1 2 1 1 2 1"/></svg>
<div class="t" style="left:469.40px;top:430px;font-size:10.0px;color:#555;transform:scaleX(0.8629);transform-origin:0 0;-webkit-text-stroke:0.12px #555;">80</div>
<svg style="position:absolute;left:497px;top:469px" width="326" height="1"><line x1="0" y1="0.5" x2="326" y2="0.5" stroke="#c4c4c4" stroke-width="1" stroke-dasharray="1 2 1 1 2 1"/></svg>
<div class="t" style="left:469.40px;top:461px;font-size:10.0px;color:#555;transform:scaleX(0.8629);transform-origin:0 0;-webkit-text-stroke:0.12px #555;">60</div>
<svg style="position:absolute;left:497px;top:500px" width="326" height="1"><line x1="0" y1="0.5" x2="326" y2="0.5" stroke="#c4c4c4" stroke-width="1" stroke-dasharray="1 2 1 1 2 1"/></svg>
<div class="t" style="left:469.40px;top:491px;font-size:10.0px;color:#555;transform:scaleX(0.8629);transform-origin:0 0;-webkit-text-stroke:0.12px #555;">40</div>
<svg style="position:absolute;left:497px;top:531px" width="326" height="1"><line x1="0" y1="0.5" x2="326" y2="0.5" stroke="#c4c4c4" stroke-width="1" stroke-dasharray="1 2 1 1 2 1"/></svg>
<div class="t" style="left:469.40px;top:522px;font-size:10.0px;color:#555;transform:scaleX(0.8629);transform-origin:0 0;-webkit-text-stroke:0.12px #555;">20</div>
<div class="t" style="left:469.40px;top:553px;font-size:10.0px;color:#555;-webkit-text-stroke:0.12px #555;">0</div>
<div style="position:absolute;left:497px;top:562px;width:326px;height:2px;background:#c8c8c8;"></div>
<div style="position:absolute;left:514.6px;top:562px;width:1px;height:4.5px;background:#c0c0c0;"></div>
<div class="t" style="left:501.50px;top:563px;font-size:10.0px;color:#555;transform:scaleX(0.8735);transform-origin:0 0;-webkit-text-stroke:0.12px #555;">Feb 23</div>
<div style="position:absolute;left:561.25px;top:562px;width:1px;height:4.5px;background:#c0c0c0;"></div>
<div class="t" style="left:548.15px;top:563px;font-size:10.0px;color:#555;transform:scaleX(0.8735);transform-origin:0 0;-webkit-text-stroke:0.12px #555;">Feb 24</div>
<div style="position:absolute;left:607.9px;top:562px;width:1px;height:4.5px;background:#c0c0c0;"></div>
<div class="t" style="left:594.80px;top:563px;font-size:10.0px;color:#555;transform:scaleX(0.8735);transform-origin:0 0;-webkit-text-stroke:0.12px #555;">Feb 25</div>
<div style="position:absolute;left:654.55px;top:562px;width:1px;height:4.5px;background:#c0c0c0;"></div>
<div class="t" style="left:641.45px;top:563px;font-size:10.0px;color:#555;transform:scaleX(0.8735);transform-origin:0 0;-webkit-text-stroke:0.12px #555;">Feb 26</div>
<div style="position:absolute;left:701.2px;top:562px;width:1px;height:4.5px;background:#c0c0c0;"></div>
<div class="t" style="left:688.10px;top:563px;font-size:10.0px;color:#555;transform:scaleX(0.8735);transform-origin:0 0;-webkit-text-stroke:0.12px #555;">Feb 27</div>
<div style="position:absolute;left:747.85px;top:562px;width:1px;height:4.5px;background:#c0c0c0;"></div>
<div class="t" style="left:734.75px;top:563px;font-size:10.0px;color:#555;transform:scaleX(0.8735);transform-origin:0 0;-webkit-text-stroke:0.12px #555;">Feb 28</div>
<div style="position:absolute;left:794.5px;top:562px;width:1px;height:4.5px;background:#c0c0c0;"></div>
<div class="t" style="left:782.80px;top:563px;font-size:10.0px;color:#555;transform:scaleX(0.8778);transform-origin:0 0;-webkit-text-stroke:0.12px #555;">March</div>
<div style="position:absolute;left:469px;top:590px;width:537px;height:1px;background:#d0d0d0;"></div>
<svg style="position:absolute;left:495px;top:380px" width="340" height="200" viewBox="0 0 340 200"><path d="M7.5 151.7 L12.5 152.2 L18.3 153.4 L23.2 152.2 L29.1 151.7 L34.9 151.7 L40.7 152.2 L45.7 153.0 L50.6 151.7 L56.4 153.0 L61.4 152.2 L67.2 152.7 L72.2 152.2 L78.0 152.2 L83.8 152.7 L89.6 152.2 L94.6 151.7 L99.6 153.9 L105.4 147.2 L110.4 148.1 L116.2 139.4 L122.0 143.1 L127.0 142.3 L132.8 141.1 L137.8 141.1 L142.8 145.6 L148.6 143.1 L154.4 146.4 L159.4 140.6 L165.2 140.6 L170.0 145.6 L175.8 143.9 L181.6 145.6 L186.6 143.1 L192.4 143.1 L198.2 143.9 L203.2 142.3 L209.0 140.6 L214.8 141.1 L219.8 143.9 L225.6 143.9 L230.6 140.1 L235.6 134.8 L241.4 142.3 L247.2 141.1 L252.2 140.1 L257.1 140.6 L262.9 143.1 L267.9 141.4 L273.7 143.4 L279.5 138.9 L284.5 143.1 L290.3 141.4 L296.1 139.8 L301.1 138.1 L306.1 140.1 L311.9 140.1 L316.9 141.1 L322.7 140.1 L327.7 138.4" fill="none" stroke="#ff5a14" stroke-width="1.9" stroke-linejoin="round"/><path d="M7.5 135.6 L18.3 137.3 L24.1 138.4 L34.9 138.4 L45.7 138.9 L56.4 138.4 L67.2 138.9 L78.0 139.4 L89.6 138.9 L94.6 138.4 L99.6 136.4 L105.4 137.8 L116.2 138.4 L127.0 139.4 L132.8 137.8 L137.8 136.1 L142.8 137.3 L148.6 138.9 L159.4 138.9 L165.2 138.4 L170.0 138.1 L175.8 138.9 L186.6 138.4 L198.2 138.9 L209.0 138.1 L214.8 136.1 L219.8 136.8 L225.6 138.1 L235.6 138.1 L247.2 138.4 L257.1 134.8 L267.9 138.1 L273.7 138.9 L284.5 135.6 L290.3 138.1 L301.1 138.9 L311.9 138.4 L322.7 137.8 L327.7 137.8" fill="none" stroke="#a9ad22" stroke-width="1.9" stroke-linejoin="round"/><path d="M7.5 135.9 L12.5 137.3 L18.3 136.4 L24.1 142.3 L29.1 138.1 L34.9 133.1 L39.8 135.6 L45.7 139.8 L50.6 141.4 L56.4 135.6 L61.4 140.1 L67.2 139.4 L72.2 138.9 L78.0 140.1 L83.8 139.8 L89.6 138.9 L94.6 134.8 L99.6 129.0 L105.4 133.5 L110.4 124.5 L116.2 129.0 L122.0 126.5 L127.0 124.8 L132.8 125.2 L137.8 127.3 L142.8 120.7 L148.6 121.5 L154.4 130.6 L159.4 131.1 L165.2 131.5 L170.0 134.0 L175.8 137.3 L181.6 134.8 L186.6 128.1 L192.4 137.3 L197.4 138.1 L203.2 127.8 L209.0 129.0 L214.8 134.8 L219.8 135.6 L225.6 127.0 L230.6 132.3 L235.6 132.8 L241.4 134.0 L247.2 135.6 L252.2 132.8 L257.1 134.0 L262.9 134.8 L267.9 133.1 L273.7 132.8 L279.5 135.6 L284.5 133.1 L290.3 134.0 L296.1 136.8 L301.1 134.0 L306.1 131.1 L311.9 138.1 L316.9 133.1 L322.7 134.4 L327.7 129.5" fill="none" stroke="#1b8ae8" stroke-width="1.9" stroke-linejoin="round"/><path d="M7.5 123.5 L12.5 125.7 L18.3 120.7 L24.1 119.5 L29.1 129.8 L34.0 127.3 L39.8 119.8 L45.7 134.8 L50.6 126.5 L56.4 121.5 L61.4 129.8 L67.2 129.0 L72.2 127.3 L78.0 121.5 L83.8 131.1 L89.6 129.0 L94.6 126.5 L99.6 128.1 L105.4 116.5 L110.4 119.5 L116.2 115.7 L122.0 116.2 L127.0 111.5 L132.8 119.8 L137.8 119.8 L142.8 119.5 L148.6 119.2 L154.4 115.7 L159.4 114.0 L165.2 116.5 L170.0 119.8 L175.8 119.0 L181.6 119.0 L186.6 116.2 L192.4 120.2 L197.4 114.9 L203.2 115.7 L209.0 119.8 L214.8 115.7 L219.8 112.4 L225.6 119.8 L230.6 119.0 L235.6 111.5 L241.4 109.9 L247.2 116.5 L252.2 117.8 L257.1 126.8 L262.9 120.7 L267.9 119.5 L273.7 116.5 L279.5 119.5 L284.5 121.2 L290.3 114.9 L296.1 118.2 L301.1 123.2 L306.1 116.9 L311.9 119.8 L316.9 123.2 L322.7 119.8 L327.7 114.0" fill="none" stroke="#8142cc" stroke-width="1.9" stroke-linejoin="round"/><path d="M7.5 123.5 L12.5 127.6 L18.3 128.1 L23.2 129.8 L29.1 131.8 L34.9 131.5 L40.7 130.6 L45.7 131.1 L50.6 129.0 L56.4 127.3 L61.4 134.0 L67.2 135.6 L72.2 136.1 L78.0 135.1 L83.8 136.1 L89.6 137.8 L94.6 132.3 L99.6 128.1 L105.4 133.1 L110.4 122.8 L116.2 126.5 L122.0 124.0 L127.0 128.1 L132.8 127.3 L137.8 125.2 L142.8 101.2 L148.6 104.6 L154.4 114.9 L159.4 115.7 L165.2 119.0 L170.0 119.8 L175.8 121.5 L181.6 125.7 L186.6 114.0 L192.4 107.4 L198.2 117.4 L203.2 119.5 L209.0 119.8 L214.8 115.7 L219.8 119.0 L225.6 122.3 L230.6 128.1 L235.6 99.1 L241.4 99.9 L246.3 96.6 L252.2 104.1 L257.1 110.7 L262.9 116.2 L267.9 109.9 L273.7 116.5 L279.5 112.4 L284.5 96.3 L290.3 105.7 L296.1 110.7 L301.1 114.9 L306.1 115.2 L311.9 114.9 L316.9 115.7 L322.7 119.0 L327.7 104.6" fill="none" stroke="#ee119a" stroke-width="1.9" stroke-linejoin="round"/><path d="M7.5 115.7 L13.3 120.7 L18.3 121.5 L23.2 120.7 L29.1 116.9 L34.9 116.5 L40.7 116.5 L45.7 116.9 L50.6 123.2 L56.4 109.9 L61.4 115.2 L67.2 117.4 L72.2 117.4 L78.0 115.7 L83.8 115.7 L89.6 116.5 L94.6 116.2 L99.6 114.9 L105.4 116.5 L110.4 114.9 L116.2 110.7 L122.0 111.5 L127.0 109.9 L132.8 114.0 L137.8 112.4 L142.8 109.9 L148.6 105.7 L154.4 113.2 L159.4 110.7 L165.2 113.2 L170.0 114.9 L175.8 106.2 L181.6 111.2 L186.6 111.2 L192.4 110.7 L198.2 113.2 L203.2 111.5 L209.0 112.9 L214.8 114.0 L219.8 115.2 L225.6 112.4 L231.4 109.5 L236.4 109.9 L242.2 110.4 L248.0 111.5 L253.0 112.4 L258.0 112.9 L262.9 112.7 L267.9 115.7 L273.7 112.4 L279.5 110.2 L284.5 110.2 L289.5 111.5 L295.3 109.5 L300.3 111.5 L306.1 110.7 L311.9 114.9 L316.9 110.7 L322.7 111.5 L327.7 110.2" fill="none" stroke="#1ca88b" stroke-width="1.9" stroke-linejoin="round"/></svg>
<div style="position:absolute;left:834.2px;top:407.2px;width:39.8px;height:23.6px;background:#1c85e8;"></div>
<div class="t" style="left:845.20px;top:404px;font-size:10.5px;color:#fff;font-weight:700;letter-spacing:0.421px;">33.9</div>
<div class="t" style="left:858.56px;top:414px;font-size:9.4px;color:#fff;font-weight:700;">%</div>
<svg style="position:absolute;left:869.5px;top:414.8px" width="8" height="8" viewBox="0 0 8 8"><circle cx="4" cy="4" r="3.3" fill="#1c85e8" stroke="#fff" stroke-width="0.8"/></svg>
<div class="t" style="left:882.30px;top:404px;font-size:10.0px;color:#222222;transform:scaleX(0.9734);transform-origin:0 0;-webkit-text-stroke:0.25px #222222;">Average CPU Load</div>
<div class="t" style="left:882.30px;top:415px;font-size:9.4px;color:#555555;transform:scaleX(0.8923);transform-origin:0 0;-webkit-text-stroke:0.12px #555555;">EASTESXCL01</div>
<div style="position:absolute;left:834.2px;top:436.0px;width:39.8px;height:23.6px;background:#f0109a;"></div>
<div class="t" style="left:845.20px;top:433px;font-size:10.5px;color:#fff;font-weight:700;letter-spacing:0.421px;">50.4</div>
<div class="t" style="left:858.56px;top:443px;font-size:9.4px;color:#fff;font-weight:700;">%</div>
<svg style="position:absolute;left:870px;top:443.6px" width="8" height="8" viewBox="0 0 8 8"><rect x="0.8" y="0.8" width="6.4" height="6.4" fill="#fff" stroke="#f0109a" stroke-width="1.4"/></svg>
<div class="t" style="left:882.30px;top:433px;font-size:10.0px;color:#222222;transform:scaleX(0.9734);transform-origin:0 0;-webkit-text-stroke:0.25px #222222;">Average CPU Load</div>
<div class="t" style="left:882.30px;top:444px;font-size:9.4px;color:#555555;transform:scaleX(0.9156);transform-origin:0 0;-webkit-text-stroke:0.12px #555555;">EASTHYVCL01</div>
<div style="position:absolute;left:834.2px;top:464.8px;width:39.8px;height:23.6px;background:#1aa98b;"></div>
<div class="t" style="left:845.20px;top:461px;font-size:10.5px;color:#fff;font-weight:700;letter-spacing:0.421px;">46.7</div>
<div class="t" style="left:858.56px;top:472px;font-size:9.4px;color:#fff;font-weight:700;">%</div>
<svg style="position:absolute;left:868.5px;top:471.90000000000003px" width="11" height="9" viewBox="0 0 11 9"><path d="M5.5 0.8L10.2 8.3H0.8Z" fill="#fff" stroke="#1aa98b" stroke-width="1.3"/></svg>
<div class="t" style="left:882.30px;top:462px;font-size:10.0px;color:#222222;transform:scaleX(0.9734);transform-origin:0 0;-webkit-text-stroke:0.25px #222222;">Average CPU Load</div>
<div class="t" style="left:882.30px;top:472px;font-size:9.4px;color:#555555;transform:scaleX(0.9009);transform-origin:0 0;-webkit-text-stroke:0.12px #555555;">WESTESXCL01</div>
<div style="position:absolute;left:834.2px;top:493.6px;width:39.8px;height:23.6px;background:#7e3cc8;"></div>
<div class="t" style="left:845.20px;top:490px;font-size:10.5px;color:#fff;font-weight:700;letter-spacing:0.421px;">44.0</div>
<div class="t" style="left:858.56px;top:500px;font-size:9.4px;color:#fff;font-weight:700;">%</div>
<svg style="position:absolute;left:869.5px;top:500.70000000000005px" width="9" height="9" viewBox="0 0 9 9"><path d="M4.5 0L9 4.5L4.5 9L0 4.5Z" fill="#7e3cc8" stroke="#fff" stroke-width="0.6"/></svg>
<div class="t" style="left:882.30px;top:491px;font-size:10.0px;color:#222222;transform:scaleX(0.9734);transform-origin:0 0;-webkit-text-stroke:0.25px #222222;">Average CPU Load</div>
<div class="t" style="left:882.30px;top:501px;font-size:9.4px;color:#555555;transform:scaleX(0.9218);transform-origin:0 0;-webkit-text-stroke:0.12px #555555;">WESTHYVCL01</div>
<div style="position:absolute;left:834.2px;top:522.4px;width:39.8px;height:23.6px;background:#aaa920;"></div>
<div class="t" style="left:845.20px;top:519px;font-size:10.5px;color:#fff;font-weight:700;letter-spacing:0.421px;">28.8</div>
<div class="t" style="left:858.56px;top:529px;font-size:9.4px;color:#fff;font-weight:700;">%</div>
<svg style="position:absolute;left:868.5px;top:529.5px" width="11" height="9" viewBox="0 0 11 9"><path d="M0.8 0.8H10.2L5.5 8.3Z" fill="#fff" stroke="#aaa920" stroke-width="1.3"/></svg>
<div class="t" style="left:882.30px;top:519px;font-size:10.0px;color:#222222;transform:scaleX(0.9734);transform-origin:0 0;-webkit-text-stroke:0.25px #222222;">Average CPU Load</div>
<div class="t" style="left:882.30px;top:530px;font-size:9.4px;color:#555555;letter-spacing:0.301px;-webkit-text-stroke:0.12px #555555;">losaesx01.demo.lab</div>
<div style="position:absolute;left:834.2px;top:551.2px;width:39.8px;height:23.6px;background:#ff5511;"></div>
<div class="t" style="left:845.20px;top:548px;font-size:10.5px;color:#fff;font-weight:700;letter-spacing:0.421px;">28.0</div>
<div class="t" style="left:858.56px;top:558px;font-size:9.4px;color:#fff;font-weight:700;">%</div>
<svg style="position:absolute;left:869px;top:558.3000000000001px" width="9" height="9" viewBox="0 0 9 9"><path d="M4.5 0.8L8.3 3.6L6.9 8.2H2.1L0.7 3.6Z" fill="#fff" stroke="#ff5511" stroke-width="1.3"/></svg>
<div class="t" style="left:882.30px;top:548px;font-size:10.0px;color:#222222;transform:scaleX(0.9734);transform-origin:0 0;-webkit-text-stroke:0.25px #222222;">Average CPU Load</div>
<div class="t" style="left:882.30px;top:559px;font-size:9.4px;color:#555555;letter-spacing:0.342px;-webkit-text-stroke:0.12px #555555;">newyesx01.demo.lab</div>
<div style="position:absolute;left:1021px;top:34px;width:3px;height:596px;background:#d6d7d9;"></div>
</body></html>
